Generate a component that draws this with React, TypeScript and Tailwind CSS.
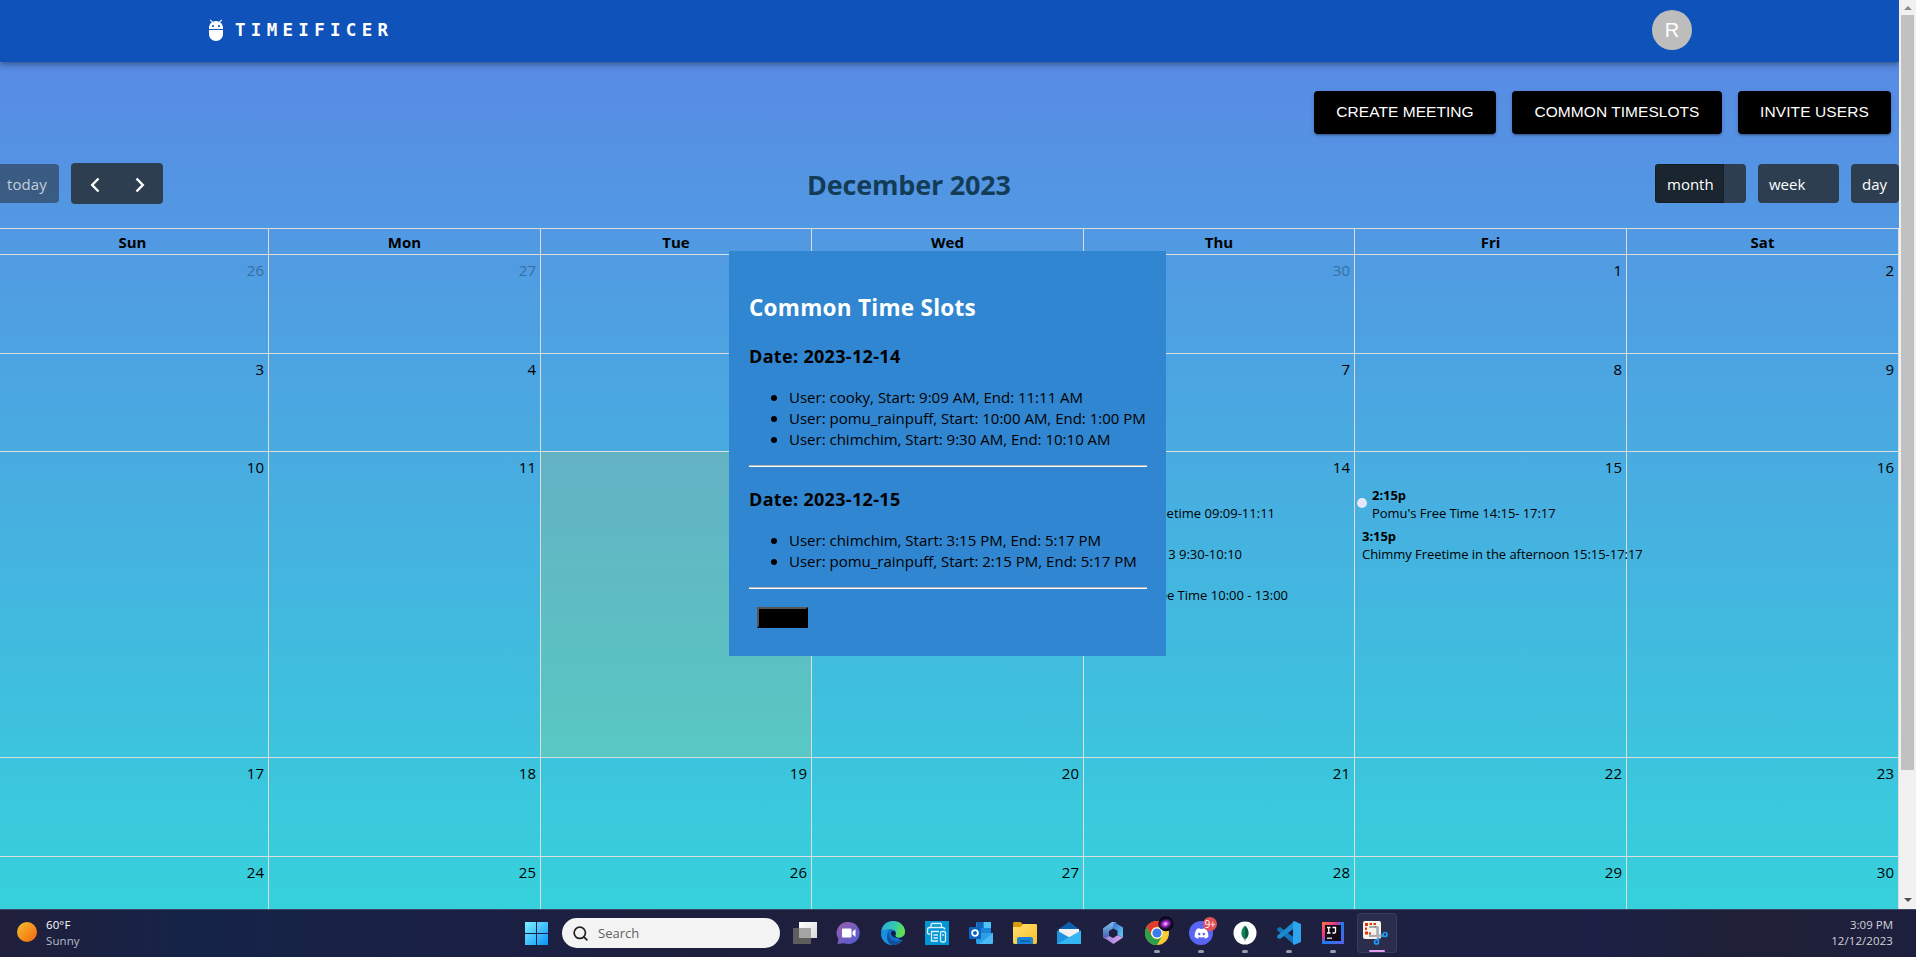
import React from "react";
import { FaDiscord } from "react-icons/fa";
import { Search } from "lucide-react";

const COLS = "grid grid-cols-[269px_272px_271px_272px_271px_272px_272px]";
const DAYS = ["Sun", "Mon", "Tue", "Wed", "Thu", "Fri", "Sat"];

type Week = { height: string; days: number[]; muted?: number[] };

const WEEKS: Week[] = [
  { height: "h-[99px]", days: [26, 27, 28, 29, 30, 1, 2], muted: [26, 27, 28, 29, 30] },
  { height: "h-[98px]", days: [3, 4, 5, 6, 7, 8, 9] },
  { height: "h-[306px]", days: [10, 11, 12, 13, 14, 15, 16] },
  { height: "h-[99px]", days: [17, 18, 19, 20, 21, 22, 23] },
  { height: "h-[53px]", days: [24, 25, 26, 27, 28, 29, 30] },
];

const SLOTS = [
  {
    date: "2023-12-14",
    users: [
      { text: "User: cooky, Start: 9:09 AM, End: 11:11 AM" },
      { text: "User: pomu_rainpuff, Start: 10:00 AM, End: 1:00 PM" },
      { text: "User: chimchim, Start: 9:30 AM, End: 10:10 AM" },
    ],
  },
  {
    date: "2023-12-15",
    users: [
      { text: "User: chimchim, Start: 3:15 PM, End: 5:17 PM" },
      { text: "User: pomu_rainpuff, Start: 2:15 PM, End: 5:17 PM" },
    ],
  },
];

function Header() {
  return (
    <header className="relative z-10 flex h-[62px] shrink-0 items-center justify-between bg-[#0f52ba] pr-[207px] pl-[204px] shadow-[0_2px_4px_-1px_rgba(0,0,0,0.2),0_4px_5px_rgba(0,0,0,0.14),0_1px_10px_rgba(0,0,0,0.12)]">
      <div className="flex items-center gap-[7px] pb-[2px]">
        <svg viewBox="0 0 24 24" className="size-6 fill-white">
          <path d="M5 16c0 3.87 3.13 7 7 7s7-3.13 7-7v-4H5v4zM16.12 4.37l2.1-2.1-.82-.83-2.3 2.31C14.16 3.28 13.12 3 12 3s-2.16.28-3.09.75L6.6 1.44l-.82.83 2.1 2.1C6.14 5.64 5 7.68 5 10v1h14v-1c0-2.32-1.14-4.36-2.88-5.63zM9 9c-.55 0-1-.45-1-1s.45-1 1-1 1 .45 1 1-.45 1-1 1zm6 0c-.55 0-1-.45-1-1s.45-1 1-1 1 .45 1 1-.45 1-1 1z" />
        </svg>
        <span className="font-['DejaVu_Sans_Mono',monospace] text-[17.5px] leading-6 font-bold tracking-[5.3px] text-white">
          TIMEIFICER
        </span>
      </div>
      <div className="mb-[2px] flex size-10 items-center justify-center rounded-full bg-[#bdbdbd] font-['Liberation_Sans',sans-serif] text-xl text-white">
        R
      </div>
    </header>
  );
}

function Actions() {
  const base =
    "flex h-[43px] items-center justify-center rounded bg-black pb-px font-['Liberation_Sans',sans-serif] text-[15.5px] whitespace-nowrap text-white shadow-[0_3px_1px_-2px_rgba(0,0,0,0.2),0_2px_2px_rgba(0,0,0,0.14),0_1px_5px_rgba(0,0,0,0.12)]";
  return (
    <div className="mt-[29px] flex justify-end gap-4 pr-2">
      <button className={`${base} w-[182px] tracking-[0.05px]`}>CREATE MEETING</button>
      <button className={`${base} w-[210px] tracking-[0.05px]`}>COMMON TIMESLOTS</button>
      <button className={`${base} w-[153px] tracking-[0.1px]`}>INVITE USERS</button>
    </div>
  );
}

function Toolbar() {
  return (
    <div className="mt-[29px] flex h-[41px] items-center justify-between text-[15px] text-white">
      <div className="flex items-center gap-3">
        <button className="h-[39px] w-[59px] rounded-r bg-[#2c3e50]/65 pt-px pl-[7px] text-left tracking-[0.1px] text-white/70">
          today
        </button>
        <div className="flex h-[41px] w-[92px] items-center justify-around rounded bg-[#2c3e50] px-[1px] pt-[2px]">
          <svg viewBox="0 0 10 16" className="h-4 w-[10px] fill-none stroke-white stroke-[2.4]">
            <path d="M8.500 1.500 2.200 8l6.300 6.500" />
          </svg>
          <svg viewBox="0 0 10 16" className="h-4 w-[10px] fill-none stroke-white stroke-[2.4]">
            <path d="M1.500 1.500 7.800 8l-6.300 6.500" />
          </svg>
        </div>
      </div>
      <h2 className="w-[204px] pt-[2px] text-[27px] leading-10 font-bold tracking-[-0.2px] whitespace-nowrap text-[#133d57]">
        December 2023
      </h2>
      <div className="flex gap-3">
        <div className="h-[39px] w-[91px] overflow-hidden rounded bg-[#2c3e50]">
          <button className="h-[39px] w-[69px] border border-[#151e27] bg-[#1a252f] pt-px pl-[11px] text-left">month</button>
        </div>
        <button className="h-[39px] w-[81px] rounded bg-[#2c3e50] pt-px pl-[11px] text-left">week</button>
        <button className="h-[39px] w-[48px] rounded bg-[#2c3e50] pt-px pl-[11px] text-left">day</button>
      </div>
    </div>
  );
}

function DayEvents({ day }: { day: number }) {
  if (day === 14) {
    return (
      <div className="mt-[7px] flex flex-col text-[13px] leading-[18px] whitespace-nowrap">
        <div className="h-[41px] w-[191px] pt-[18px] text-right">Freetime 09:09-11:11</div>
        <div className="h-[41px] w-[158px] pt-[18px] text-right">13 9:30-10:10</div>
        <div className="h-[41px] w-[204px] pt-[18px] text-right">Free Time 10:00 - 13:00</div>
      </div>
    );
  }
  if (day === 15) {
    return (
      <div className="mt-[7px] flex flex-col text-[13px] leading-[18px] tracking-[-0.05px] whitespace-nowrap">
        <div className="flex h-[41px] items-start">
          <span className="mt-[12px] mr-[5px] ml-[2px] size-[10px] shrink-0 rounded-full bg-[#e6e6fa]" />
          <div>
            <div className="font-bold">2:15p</div>
            <div>Pomu's Free Time 14:15- 17:17</div>
          </div>
        </div>
        <div className="ml-[7px]">
          <div className="font-bold">3:15p</div>
          <div>Chimmy Freetime in the afternoon 15:15-17:17</div>
        </div>
      </div>
    );
  }
  return null;
}

function Calendar() {
  return (
    <div className="mt-6 w-[1899px]">
      <div className={`${COLS} h-[26px] border-t border-[#ddd] text-[15px] font-bold`}>
        {DAYS.map((d) => (
          <div key={d} className="border-r border-[#ddd] text-center leading-[27px] first:pr-[3px]">
            {d}
          </div>
        ))}
      </div>
      {WEEKS.map((w, i) => (
        <div key={i} className={`${COLS} ${w.height} border-t border-[#ddd]`}>
          {w.days.map((d) => (
            <div
              key={d}
              className={`min-w-0 border-r border-[#ddd] ${i === 2 && d === 12 ? "bg-[rgba(255,220,40,0.15)]" : ""}`}
            >
              <div
                className={`pt-[4px] pr-1 text-right text-[15px] leading-[23px] ${w.muted?.includes(d) ? "opacity-30" : ""}`}
              >
                {d}
              </div>
              {i === 2 && <DayEvents day={d} />}
            </div>
          ))}
        </div>
      ))}
    </div>
  );
}

function SlotsModal() {
  return (
    <section className="absolute top-[251px] left-[729px] z-20 flex h-[405px] w-[437px] flex-col bg-[#3086d0] px-5 pt-[41px] text-[15px]">
      <h2 className="text-[22.5px] leading-8 font-bold tracking-[0.28px] text-white">Common Time Slots</h2>
      {SLOTS.map((s) => (
        <div key={s.date}>
          <h3 className="mt-[18px] text-[18px] leading-[26px] font-bold tracking-[0.32px] first:mt-[19px]">
            Date: {s.date}
          </h3>
          <ul className="mt-[18px] text-[15px] leading-[21px] whitespace-nowrap">
            {s.users.map((u) => (
              <li key={u.text} className="flex items-center">
                <span className="mr-[12px] ml-[22px] size-[6px] rounded-full bg-black" />
                {u.text}
              </li>
            ))}
          </ul>
          <div className="mt-[15px] h-[2px] w-[398px] border-t border-[#b4b4b4] bg-white" />
        </div>
      ))}
      <button className="mt-[18px] ml-2 h-[21px] w-[51px] border-2 border-t-[#555] border-r-black border-b-black border-l-[#555] bg-black" />
    </section>
  );
}

function Scrollbar() {
  return (
    <div className="flex h-[909px] w-[17px] flex-col items-center justify-between bg-[#f1f1f1]">
      <div className="flex h-[15px] items-center">
        <svg viewBox="0 0 8 4" className="h-1 w-2 fill-[#8b8b8b]">
          <path d="M4 0 8 4H0z" />
        </svg>
      </div>
      <div className="mb-auto h-[755px] w-[13px] bg-[#c1c1c1]" />
      <div className="flex h-[18px] items-center">
        <svg viewBox="0 0 8 4" className="h-1 w-2 fill-[#505050]">
          <path d="M0 0h8L4 4z" />
        </svg>
      </div>
    </div>
  );
}

const Icon = ({ children }: { children: React.ReactNode }) => (
  <svg viewBox="0 0 24 24" className="size-6 overflow-visible">
    {children}
  </svg>
);

function Gradients() {
  return (
    <svg className="absolute size-0">
      <defs>
        <linearGradient id="win" x1="0" y1="0" x2="1" y2="1">
          <stop offset="0" stopColor="#7df0ff" />
          <stop offset="1" stopColor="#0a93f8" />
        </linearGradient>
        <linearGradient id="chat" x1="0" y1="0" x2="1" y2="1">
          <stop offset="0" stopColor="#a05fa8" />
          <stop offset="1" stopColor="#4b5bd6" />
        </linearGradient>
        <linearGradient id="edge" x1="0" y1="0" x2="1" y2="0.3">
          <stop offset="0" stopColor="#2aa5dd" />
          <stop offset="0.6" stopColor="#35c8b0" />
          <stop offset="1" stopColor="#63e04f" />
        </linearGradient>
        <linearGradient id="folder" x1="0" y1="0" x2="1" y2="1">
          <stop offset="0" stopColor="#ffdf6e" />
          <stop offset="1" stopColor="#f9bf2c" />
        </linearGradient>
        <linearGradient id="m365a" x1="0" y1="0" x2="0" y2="1">
          <stop offset="0" stopColor="#7cc3ea" />
          <stop offset="1" stopColor="#4458b0" />
        </linearGradient>
        <linearGradient id="m365b" x1="0" y1="0" x2="1" y2="1">
          <stop offset="0" stopColor="#3d6bd0" />
          <stop offset="1" stopColor="#5fd0f5" />
        </linearGradient>
        <linearGradient id="m365c" x1="0" y1="0" x2="1" y2="0">
          <stop offset="0" stopColor="#9d7fd8" />
          <stop offset="1" stopColor="#d3a3ea" />
        </linearGradient>
        <linearGradient id="idea" x1="0" y1="0" x2="1" y2="1">
          <stop offset="0" stopColor="#fe7a3c" />
          <stop offset="0.35" stopColor="#e8318c" />
          <stop offset="0.5" stopColor="#1c7cf0" />
          <stop offset="1" stopColor="#5a5de8" />
        </linearGradient>
        <linearGradient id="sun" x1="0" y1="0" x2="1" y2="1">
          <stop offset="0" stopColor="#f7c02e" />
          <stop offset="1" stopColor="#f1660f" />
        </linearGradient>
        <linearGradient id="front" x1="0" y1="0" x2="1" y2="1">
          <stop offset="0" stopColor="#ffffff" />
          <stop offset="1" stopColor="#d9d9d9" />
        </linearGradient>
        <radialGradient id="orb">
          <stop offset="0" stopColor="#ffd9ff" />
          <stop offset="0.35" stopColor="#c33be0" />
          <stop offset="0.75" stopColor="#3b1160" />
          <stop offset="1" stopColor="#0b0618" />
        </radialGradient>
      </defs>
    </svg>
  );
}

const APPS: { icon: React.ReactNode; running?: boolean; active?: boolean }[] = [
  {
    icon: (
      <Icon>
        <rect x="6" y="1" width="18" height="16" fill="url(#front)" />
        <rect x="0" y="7" width="18" height="16" fill="#5d5d5d" />
        <rect x="6" y="7" width="12" height="10" fill="#a5a5a5" />
      </Icon>
    ),
  },
  {
    icon: (
      <Icon>
        <path d="M12 1a11.500 11 0 1 1-5 21.200L0.500 23l1-5A11.500 11 0 0 1 12 1z" fill="url(#chat)" />
        <rect x="5" y="7.500" width="9.500" height="9" rx="1" fill="#fff" />
        <path d="M15.500 10.500 18.500 8v8l-3-2.500z" fill="#fff" />
      </Icon>
    ),
  },
  {
    icon: (
      <Icon>
        <circle cx="12" cy="12" r="12" fill="#0f6fc9" />
        <path
          d="M.2 10.500C1.200 4 6 0 12 0c7 0 12 5 12 10.500 0 4-3 6-6.500 6-3 0-4-1.500-3-3 1.200-2 .2-5.200-4.500-5.200C5.500 8.300 1.500 9.500.2 10.500z"
          fill="url(#edge)"
        />
        <path d="M8 9.500c-4 3-2.500 10.500 3.500 14.400C5 24-.3 19 .1 11.500 2 8.500 5.500 8.200 8 9.500z" fill="#1a8fe0" />
        <path d="M8.300 11.500c-1.500 5 2.700 9.500 8.200 9 2.700-.2 5-1.500 6-2.400-3 5-9 6.900-12.500 5.500-4-2-5.500-8.500-1.700-12.100z" fill="#134f9c" />
        <path d="M10.500 10.500c3-1.500 5 1 4.200 3-1 1.500 0 3 2.800 3-4 1-9-2-7-6z" fill="#101f45" />
        <path d="M17 17.200c2.800 0 5-1 7-3.700v5l-2 .2c-1.500.5-4 .2-5-1.500z" fill="#1d1e3d" />
      </Icon>
    ),
  },
  {
    icon: (
      <Icon>
        <rect width="24" height="24" fill="#0096d6" />
        <g fill="none" stroke="#d9f1fc" strokeWidth="1.300">
          <path d="M6 6V3.700C6 3 6.500 2.500 7 2.500h8.500c.6 0 1 .5 1 1.200V6M5 13H3.700C3 13 2.500 12.500 2.500 12V9c0-1.500.8-2.500 2-2.500h13c1.500 0 2.200.8 2.300 2" />
          <path d="M13 20H6.500V10.500H14M8.500 14H13M8.500 17H13" />
          <rect x="15.500" y="10.500" width="5" height="10.500" rx="1.500" />
          <path d="M18 13v2" />
        </g>
      </Icon>
    ),
  },
  {
    icon: (
      <Icon>
        <rect x="7" y="1" width="15" height="14" rx="1" fill="#1a85d8" />
        <rect x="14.500" y="1" width="7.500" height="6" fill="#4cc4f8" />
        <rect x="8" y="1" width="6.500" height="6" fill="#1565b8" />
        <path d="M7 12h17v9.500c0 .8-.6 1.500-1.500 1.500H8.500C7.600 23 7 22.300 7 21.500z" fill="#2b9fe6" />
        <path d="m24 12-14 11h12.500c.9 0 1.500-.7 1.500-1.500z" fill="#4ab9f3" />
        <rect x="0" y="6" width="12" height="12" rx="1" fill="#0a64c0" />
        <circle cx="6" cy="12" r="2.900" fill="none" stroke="#fff" strokeWidth="1.800" />
      </Icon>
    ),
  },
  {
    icon: (
      <Icon>
        <path d="M0 2.500C0 1.700.6 1 1.400 1h6.200L10 3.500V7H0z" fill="#d99a0b" />
        <path d="M0 6h7.500L10 3h12.600c.8 0 1.400.6 1.400 1.400v17.200c0 .8-.6 1.400-1.400 1.400H1.400C.6 23 0 22.400 0 21.600z" fill="url(#folder)" />
        <path d="M4 23v-5c0-1.200.8-2 2-2h12c1.200 0 2 .8 2 2v5z" fill="#1682d8" />
        <rect x="7" y="19.500" width="10" height="1.500" rx="0.700" fill="#0b5aa6" />
      </Icon>
    ),
  },
  {
    icon: (
      <Icon>
        <path d="M12 .8 24 9.500 12 17 0 9.500z" fill="#0f5fb0" />
        <path d="M2 8h20v4l-10 6L2 12z" fill="#f1f1f1" />
        <path d="M0 9.500 24 23H0z" fill="#1f93dd" />
        <path d="M24 9.500 0 23h24z" fill="#33b6f2" />
      </Icon>
    ),
  },
  {
    icon: (
      <Icon>
        <path d="M11 1h4L12 7.500 8 10v6.500L4 18l-2-1.500V7.200z" fill="url(#m365a)" />
        <path d="m13 1 9 5.500v10L16.500 14V9.800L11.500 7z" fill="url(#m365b)" />
        <path d="m2 16 3 .8 3-1.800 4 2 4.500-2.700 5.500 2.200L12.500 23z" fill="url(#m365c)" />
      </Icon>
    ),
  },
  {
    running: true,
    icon: (
      <Icon>
        <circle cx="12" cy="12" r="12" fill="#fcc934" />
        <path d="M1.600 6a12 12 0 0 1 20.800 0H12a6 6 0 0 0-5.200 9z" fill="#e33b2e" />
        <path d="M1.600 6a12 12 0 0 0 10.400 18l5.200-9A6 6 0 0 1 6.800 15z" fill="#2ea04b" />
        <circle cx="12" cy="12" r="5.800" fill="#fff" />
        <circle cx="12" cy="12" r="4.600" fill="#3a7de8" />
        <circle cx="21" cy="2.800" r="7.500" fill="#0b0618" />
        <ellipse cx="20.500" cy="2.800" rx="7" ry="5.500" fill="url(#orb)" transform="rotate(-20 20.500 2.800)" />
      </Icon>
    ),
  },
  {
    running: true,
    icon: (
      <div className="relative flex size-6 items-center justify-center rounded-full bg-[#5865f2]">
        <FaDiscord className="size-[15px] text-white" />
        <span className="absolute -top-[4px] left-[14px] flex size-[14px] items-center justify-center rounded-full bg-[#e0525a] text-[10px] leading-none tracking-[-0.3px] text-white">
          9+
        </span>
      </div>
    ),
  },
  {
    running: true,
    icon: (
      <Icon>
        <circle cx="12" cy="12" r="11.500" fill="#fff" />
        <path d="M12 4.500c3 2.800 3.600 5 3.600 7.700 0 2.900-1.600 4.800-3.600 6.500z" fill="#0b5a42" />
        <path d="M12 4.500c-3 2.800-3.600 5-3.600 7.700 0 2.900 1.600 4.800 3.600 6.500z" fill="#11845a" />
        <path d="M12 17v3" stroke="#6c9c8b" strokeWidth="0.800" />
      </Icon>
    ),
  },
  {
    running: true,
    icon: (
      <Icon>
        <path d="M17 23.500 17.500 17 3 6 1.200 6.700.2 7.800v1.400z" fill="#0f76bd" />
        <path d="M17 .5 17.500 7 3 18l-1.800-.7-1-1.100v-1.400z" fill="#1c88d0" />
        <path d="M17 .1 24 3v18l-7 2.900c-.6-.2-1-.9-1-1.600V1.700c0-.7.400-1.400 1-1.600z" fill="#2ea4ef" />
      </Icon>
    ),
  },
  {
    running: true,
    icon: (
      <Icon>
        <rect x="1" y="1" width="22" height="22" fill="url(#idea)" />
        <rect x="4" y="4" width="16" height="16" fill="#120a14" />
        <path d="M6 6.500h3.500M6 12h3.500M7.750 6.500V12M11.500 6.500h3V11q0 1-1.200 1h-1.800" fill="none" stroke="#fff" strokeWidth="1.300" />
        <rect x="6" y="16.500" width="5" height="1.500" fill="#cfcfcf" />
      </Icon>
    ),
  },
  {
    active: true,
    icon: (
      <Icon>
        <rect x="-2" y="0" width="18" height="18" rx="2" fill="#f7f1ec" />
        <g fill="#d83b01">
          <path d="M0 2h3v3H0zM4.500 2h2.500v2H4.500zM8.500 2H11v2H8.500zM0 6.500h2V9H0zM0 10.500h3v3H0zM9.500 5h1.500v1.500H9.500zM4 11.500h2v2H4z" />
        </g>
        <path d="M4 6h8.500v9" fill="none" stroke="#8e9297" strokeWidth="1.600" />
        <path d="m12.500 6 .3 12M4 15l14.500-.3" stroke="#a7abb0" strokeWidth="2.200" />
        <circle cx="20" cy="13.500" r="2" fill="none" stroke="#1f9cf0" strokeWidth="1.700" />
        <circle cx="11.500" cy="21" r="2" fill="none" stroke="#1f9cf0" strokeWidth="1.700" />
        <path d="m12.700 19.300 1.500-2.300M18.300 14.500l-2 .8" stroke="#1f9cf0" strokeWidth="1.600" />
      </Icon>
    ),
  },
];

function Taskbar() {
  return (
    <footer className="flex h-12 items-start border-t border-[#3c4866] bg-[linear-gradient(90deg,#201f3b_0px,#152348_190px,#1a2044_480px,#1e1f3d_700px,#1e2040_1300px,#1b2044_1600px,#1f2036_1740px,#1e1f3d_1916px)] text-[11.5px] leading-4">
      <Gradients />
      <div className="flex w-[525px] items-start pl-[17px]">
        <svg viewBox="0 0 20 20" className="mt-[12px] size-5">
          <circle cx="10" cy="10" r="10" fill="url(#sun)" />
        </svg>
        <div className="mt-[7px] ml-[9px]">
          <div className="tracking-[0.1px] text-white">60°F</div>
          <div className="tracking-[0.1px] text-[#b9bcc8]">Sunny</div>
        </div>
      </div>
      <svg viewBox="0 0 23 23" className="mt-3 size-[23px] shrink-0">
        <path d="M0 0h11v11H0zM12 0h11v11H12zM0 12h11v11H0zM12 12h11v11H12z" fill="url(#win)" />
      </svg>
      <div className="mt-2 ml-[14px] flex h-[30px] w-[218px] shrink-0 items-center rounded-full bg-[#f3f3f3] pl-[10px] text-[13px] text-[#5f5f5f]">
        <Search className="size-[17px] text-[#222]" strokeWidth={2.4} />
        <span className="ml-[9px]">Search</span>
      </div>
      <div className="ml-[3px] flex">
        {APPS.map((a, i) => (
          <div key={i} className="flex w-11 justify-center pt-[3px]">
            <div
              className={`flex h-10 w-10 flex-col items-center rounded ${a.active ? "border border-white/8 bg-white/6 pt-[7px]" : "pt-2"}`}
            >
              <div className="flex h-6 items-center">{a.icon}</div>
              {a.running && <div className="mt-[5px] h-[3px] w-[6px] rounded-full bg-[#9a9dab]" />}
              {a.active && <div className="mt-[5px] h-[3px] w-4 rounded-full bg-[#e3a0ee]" />}
            </div>
          </div>
        ))}
      </div>
      <div className="mt-[7px] ml-auto pr-[23px] text-right text-[#d2d3da]">
        <div>3:09 PM</div>
        <div className="tracking-[0.08px]">12/12/2023</div>
      </div>
    </footer>
  );
}

export default function App() {
  return (
    <div className="relative h-[957px] w-[1916px] overflow-hidden font-['Open_Sans','Noto_Sans',sans-serif] text-black">
      <div className="flex h-[909px]">
        <main className="flex h-[909px] w-[1899px] flex-col overflow-hidden bg-[linear-gradient(180deg,#5b86e5,#36d1dc)]">
          <Header />
          <Actions />
          <Toolbar />
          <Calendar />
        </main>
        <Scrollbar />
      </div>
      <SlotsModal />
      <Taskbar />
    </div>
  );
}
